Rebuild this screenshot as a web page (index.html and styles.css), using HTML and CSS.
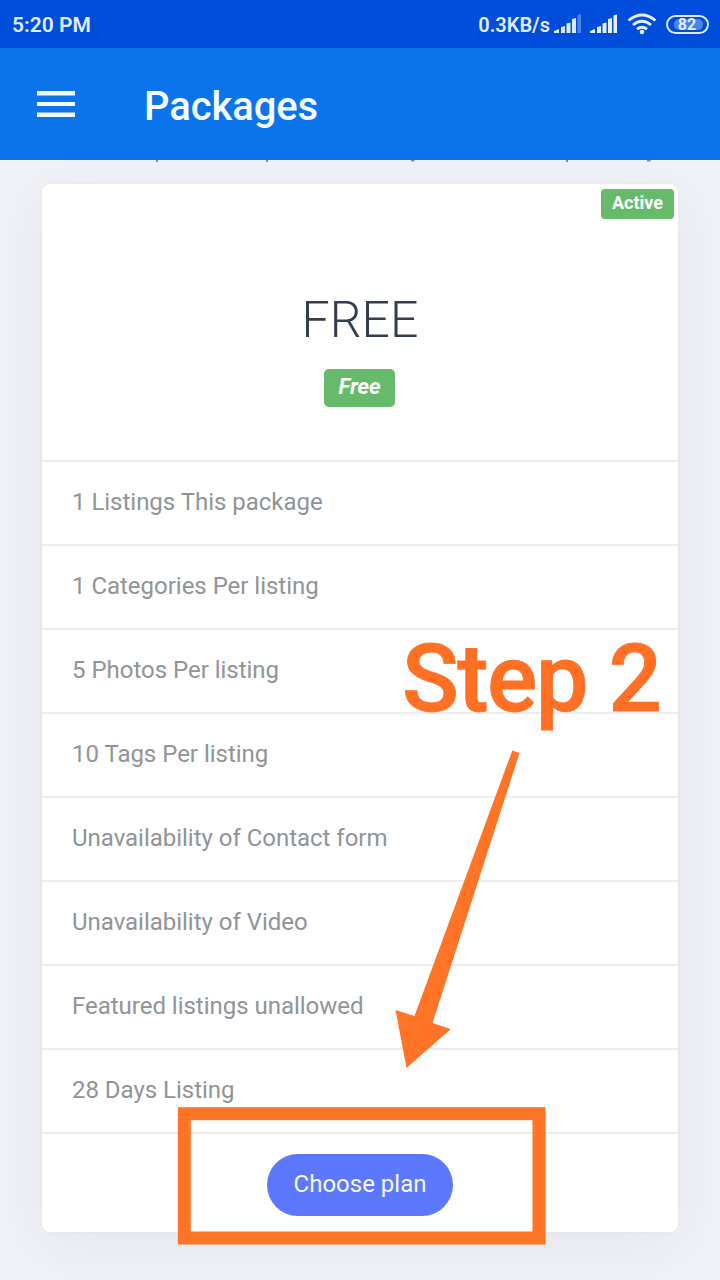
FILE: index.html
```html
<!DOCTYPE html>
<html lang="en">
<head>
<meta charset="utf-8">
<title>Packages</title>
<link rel="stylesheet" href="styles.css">
</head>
<body>
<div class="screen">
  <div class="status">
    <span class="time">5:20 PM</span>
    <span class="speed">0.3KB/s</span>
    <svg class="signal-one" width="28" height="20" viewBox="0 0 28 20" fill="#dceaff"><path d="M0 19v-2l5-2v4zM7 19v-6l4-1v7zM12.500 19V9.500l4-1V19zM18 19V5l4-1v15z"/><path opacity=".35" d="M23.500 19V1l3.500-1v19z"/></svg>
    <svg class="signal-two" width="28" height="20" viewBox="0 0 28 20" fill="#e4f0ff"><path d="M0 19v-2l5-2v4zM7 19v-6l4-1v7zM12.500 19V9.500l4-1V19zM18 19V5l4-1v15zM23.500 19V1.500l3.500-1V19z"/></svg>
    <svg class="wifi" width="30" height="22" viewBox="0 0 30 22" fill="none" stroke="#e4f0ff" stroke-width="2.800"><path d="M1.500 7.500Q15-3.500 28.500 7.500M6 12q9-7.500 18 0M10 16.200q5-4 10 0"/><circle cx="15" cy="19" r="2.300" fill="#e4f0ff" stroke="none"/></svg>
    <span class="battery"><span class="level">82</span></span>
  </div>
  <header class="appbar">
    <svg class="menu" width="38" height="26" viewBox="0 0 38 26" fill="#f2fbff"><path d="M0 0h38v4.500H0zM0 11h38v4H0zM0 21.500h38V26H0z"/></svg>
    <h1 class="title">Packages</h1>
  </header>
  <main class="content">
    <svg class="descenders" width="720" height="3" viewBox="0 0 720 3" fill="#7e8bad"><path d="M156 0h2v2h-2zM266 0h2v2h-2zM411 0h4l-1 1.500h-3zM566 0h2v2h-2zM647 0h4l-1 1.500h-3z"/></svg>
    <section class="card">
      <div class="plan">
        <span class="active">Active</span>
        <h2 class="name">FREE</h2>
        <em class="price">Free</em>
      </div>
      <ul class="features">
        <li>1 Listings This package</li>
        <li>1 Categories Per listing</li>
        <li>5 Photos Per listing</li>
        <li>10 Tags Per listing</li>
        <li>Unavailability of Contact form</li>
        <li>Unavailability of Video</li>
        <li>Featured listings unallowed</li>
        <li>28 Days Listing</li>
      </ul>
      <div class="footer"><button class="choose">Choose plan</button></div>
    </section>
  </main>
  <svg class="annotation" width="720" height="1280" viewBox="0 0 720 1280">
    <text class="step" x="402" y="711" textLength="260">Step 2</text>
    <path fill="#ff7426" d="M512.300 750.500L519.500 753 432.500 1023 450.800 1029 406.500 1068 395.500 1010 414.500 1016z"/>
    <rect x="184.300" y="1113.700" width="354.700" height="124.300" fill="none" stroke="#ff7426" stroke-width="13"/>
  </svg>
</div>
</body>
</html>
```
FILE: styles.css
```css
* { box-sizing: border-box; }
body { margin: 0; font-family: Roboto, "Liberation Sans", sans-serif; }
.screen { position: relative; width: 720px; height: 1280px; overflow: hidden; background: #f1f2f8; display: flex; flex-direction: column; }
.status { height: 48px; background: #004cdb; color: #e1edff; display: flex; align-items: center; padding: 0 11px 0 12px; font-weight: 600; font-size: 21px; flex: none; }
.time { flex: 1; padding-top: 1px; }
.speed { font-size: 20px; margin-right: 4px; padding-top: 1px; }
.signal-one { margin-right: 8px; }
.signal-two { margin-right: 9px; }
.wifi { margin-right: 9px; }
.battery { width: 43px; height: 19px; border: 2px solid #dceaff; border-radius: 10px; padding: 2px 3px; font-size: 16px; font-weight: 700; }
.level { display: flex; align-items: center; justify-content: center; width: 29px; height: 11px; margin-left: 3px; padding-right: 3px; background: #4b83e7; border-radius: 5px; }
.appbar { height: 112px; background: #0c74eb; display: flex; align-items: center; padding-left: 37px; gap: 69px; color: #f5fcff; flex: none; }
.title { margin: 5px 0 0; font-size: 40px; letter-spacing: -.1px; font-weight: 500; line-height: 48px; }
.content { flex: 1; min-height: 0; display: flex; flex-direction: column; align-items: center; }
.descenders { height: 3px; flex: none; }
.card { margin-top: 21px; width: 636px; height: 1048px; flex: none; background: #fff; border-radius: 8px; box-shadow: 0 0 0 2px rgba(0,0,0,.012), 0 12px 60px rgba(60,40,60,.065); }
.plan { position: relative; height: 276px; display: flex; flex-direction: column; align-items: center; padding-top: 106px; }
.active { position: absolute; top: 5px; right: 4px; width: 73px; height: 30px; border-radius: 4px; background: #66bb6a; color: #fff; text-align: center; font-size: 18px; line-height: 28px; font-weight: 700; }
.name { margin: 0; font-size: 50px; line-height: 60px; font-weight: 300; color: #343d4c; }
.price { margin-top: 19px; margin-right: 1px; width: 71px; height: 38px; border-radius: 5px; background: #66bb6a; color: #fff; font-size: 22px; line-height: 35px; font-weight: 700; text-align: center; }
.features { list-style: none; margin: 0; padding: 0; border-bottom: 2px solid #ededee; }
.features li { height: 84px; border-top: 2px solid #ededee; padding: 0 0 2px 30px; display: flex; align-items: center; font-size: 24px; letter-spacing: -.02px; color: #909498; }
.footer { display: flex; justify-content: center; padding-top: 20px; }
.choose { width: 186px; height: 62px; border: 0; border-radius: 31px; background: #5c78ff; color: #f5f8ff; font-family: inherit; font-size: 24px; padding: 0 0 2px; }
.annotation { position: absolute; inset: 0; }
.step { font-family: Roboto, sans-serif; font-size: 94px; font-weight: 500; fill: #ff7024; stroke: #ff7024; stroke-width: .8px; }
```
